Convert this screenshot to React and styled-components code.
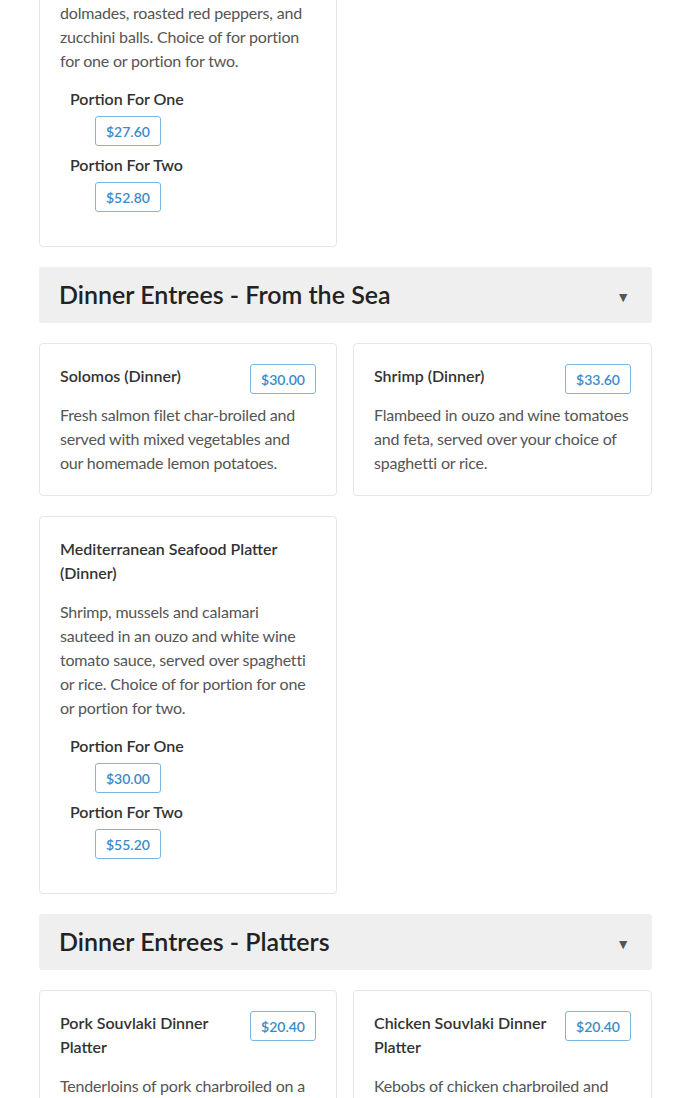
import React from "react";
import styled, { createGlobalStyle } from "styled-components";

const GlobalStyle = createGlobalStyle`
  body {
    margin: 0;
    background: #fff;
    font-family: Lato, "Open Sans", "Liberation Sans", sans-serif;
    color: #333;
  }
`;

const sections = [
  {
    title: null,
    items: [
      {
        name: "Vegetarian Platter (Dinner)",
        desc: "dolmades, roasted red peppers, and zucchini balls. Choice of for portion for one or portion for two.",
        options: [
          { label: "Portion For One", price: "$27.60" },
          { label: "Portion For Two", price: "$52.80" },
        ],
      },
    ],
  },
  {
    title: "Dinner Entrees - From the Sea",
    items: [
      {
        name: "Solomos (Dinner)",
        price: "$30.00",
        desc: "Fresh salmon filet char-broiled and served with mixed vegetables and our homemade lemon potatoes.",
      },
      {
        name: "Shrimp (Dinner)",
        price: "$33.60",
        desc: "Flambeed in ouzo and wine tomatoes and feta, served over your choice of spaghetti or rice.",
      },
      {
        name: "Mediterranean Seafood Platter (Dinner)",
        desc: "Shrimp, mussels and calamari sauteed in an ouzo and white wine tomato sauce, served over spaghetti or rice. Choice of for portion for one or portion for two.",
        options: [
          { label: "Portion For One", price: "$30.00" },
          { label: "Portion For Two", price: "$55.20" },
        ],
      },
    ],
  },
  {
    title: "Dinner Entrees - Platters",
    items: [
      {
        name: "Pork Souvlaki Dinner Platter",
        price: "$20.40",
        desc: "Tenderloins of pork charbroiled on a skewer, served with rice, lemon potatoes and a side salad.",
      },
      {
        name: "Chicken Souvlaki Dinner Platter",
        price: "$20.40",
        desc: "Kebobs of chicken charbroiled and served with rice, lemon potatoes and a side salad.",
      },
    ],
  },
];

function MenuCard({ item }) {
  return (
    <Card>
      <CardHead>
        <ItemName>{item.name}</ItemName>
        {item.price && <Price>{item.price}</Price>}
      </CardHead>
      <Desc>{item.desc}</Desc>
      {item.options && (
        <Options>
          {item.options.map((o) => (
            <Option key={o.label}>
              <OptionLabel>{o.label}</OptionLabel>
              <OptionPrice>{o.price}</OptionPrice>
            </Option>
          ))}
        </Options>
      )}
    </Card>
  );
}

export default function App() {
  return (
    <>
      <GlobalStyle />
      <Page>
        {sections.map((s, i) => (
          <React.Fragment key={i}>
            {s.title && (
              <SectionHeader>
                <SectionTitle>{s.title}</SectionTitle>
                <Caret>▼</Caret>
              </SectionHeader>
            )}
            <Grid>
              {s.items.map((item) => (
                <MenuCard key={item.name} item={item} />
              ))}
            </Grid>
          </React.Fragment>
        ))}
      </Page>
    </>
  );
}

const Page = styled.div`
  margin-top: -59px;
  padding: 0 38px 40px 39px;
  display: flex;
  flex-direction: column;
  gap: 20px;
`;

const SectionHeader = styled.div`
  height: 56px;
  box-sizing: border-box;
  display: flex;
  align-items: center;
  justify-content: space-between;
  padding: 0 22px 2px 20px;
  background: #efefef;
  border-radius: 3px;
`;

const SectionTitle = styled.h2`
  margin: 0;
  font-size: 25px;
  font-weight: 600;
  color: #222;
`;

const Caret = styled.span`
  font-size: 14px;
  color: #555;
  padding-top: 4px;
`;

const Grid = styled.div`
  display: grid;
  grid-template-columns: 298px 299px;
  justify-content: space-between;
  gap: 20px 16px;
  align-items: start;
`;

const Card = styled.div`
  border: 1px solid #e6e6e6;
  border-radius: 4px;
  padding: 20px;
`;

const CardHead = styled.div`
  display: flex;
  align-items: flex-start;
  justify-content: space-between;
  gap: 16px;
`;

const ItemName = styled.div`
  font-size: 16px;
  font-weight: 600;
  line-height: 24px;
  color: #333;
  margin-bottom: 15px;
`;

const Price = styled.span`
  flex: none;
  box-sizing: border-box;
  height: 30px;
  padding: 0 10px;
  display: inline-flex;
  align-items: center;
  border: 1px solid #7ab6de;
  border-radius: 3px;
  font-size: 14px;
  font-weight: 600;
  color: #3a8ccb;
`;

const Desc = styled.p`
  margin: 0;
  font-size: 16px;
  line-height: 24px;
  letter-spacing: -0.2px;
  color: #555;
`;

const Options = styled.div`
  display: flex;
  flex-direction: column;
  gap: 7px;
  margin: 14px 0 14px 10px;
`;

const Option = styled.div`
  display: flex;
  flex-direction: column;
  align-items: flex-start;
  gap: 5px;
`;

const OptionLabel = styled.div`
  font-size: 16px;
  font-weight: 600;
  line-height: 24px;
  color: #333;
`;

const OptionPrice = styled(Price)`
  margin-left: 25px;
`;
